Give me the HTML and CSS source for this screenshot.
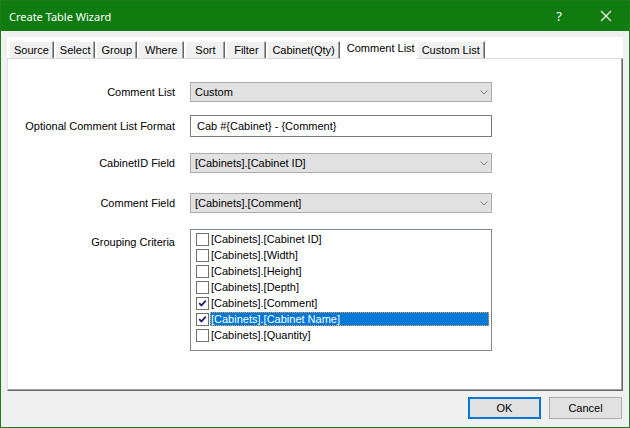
FILE: index.html
```html
<!DOCTYPE html>
<html>
<head>
<meta charset="utf-8">
<link rel="stylesheet" href="styles.css">
</head>
<body>
<div class="window">
  <header class="titlebar">
    <span class="title">Create Table Wizard</span>
    <div class="title-buttons">
      <span class="tb-btn help">?</span>
      <span class="tb-btn close">
        <svg width="12" height="12" viewBox="0 0 12 12"><path d="M1 1 L11 11 M11 1 L1 11" stroke="#fff" stroke-width="1.1" fill="none"/></svg>
      </span>
    </div>
  </header>
  <main class="client">
    <div class="tabctl">
      <div class="tabs">
        <span class="tab">Source</span>
        <span class="tab">Select</span>
        <span class="tab">Group</span>
        <span class="tab tab-where">Where</span>
        <span class="tab">Sort</span>
        <span class="tab">Filter</span>
        <span class="tab">Cabinet(Qty)</span>
        <span class="tab active">Comment List</span>
        <span class="tab">Custom List</span>
      </div>
      <div class="panel">
        <div class="row">
          <label class="lbl">Comment List</label>
          <div class="combo"><span>Custom</span><svg class="chev" width="8" height="5" viewBox="0 0 8 5"><path d="M0.5 0.5 L4 4 L7.5 0.5" stroke="#7a7a7a" fill="none"/></svg></div>
        </div>
        <div class="row gap-13">
          <label class="lbl">Optional Comment List Format</label>
          <div class="textbox">Cab #{Cabinet} - {Comment}</div>
        </div>
        <div class="row gap-16">
          <label class="lbl">CabinetID Field</label>
          <div class="combo"><span>[Cabinets].[Cabinet ID]</span><svg class="chev" width="8" height="5" viewBox="0 0 8 5"><path d="M0.5 0.5 L4 4 L7.5 0.5" stroke="#7a7a7a" fill="none"/></svg></div>
        </div>
        <div class="row gap-20">
          <label class="lbl">Comment Field</label>
          <div class="combo"><span>[Cabinets].[Comment]</span><svg class="chev" width="8" height="5" viewBox="0 0 8 5"><path d="M0.5 0.5 L4 4 L7.5 0.5" stroke="#7a7a7a" fill="none"/></svg></div>
        </div>
        <div class="row row-top gap-16">
          <label class="lbl lbl-top">Grouping Criteria</label>
          <div class="listbox">
            <div class="item"><span class="cb"></span><span class="itxt">[Cabinets].[Cabinet ID]</span></div>
            <div class="item"><span class="cb"></span><span class="itxt">[Cabinets].[Width]</span></div>
            <div class="item"><span class="cb"></span><span class="itxt">[Cabinets].[Height]</span></div>
            <div class="item"><span class="cb"></span><span class="itxt">[Cabinets].[Depth]</span></div>
            <div class="item"><span class="cb"><svg width="11" height="11" viewBox="0 0 11 11"><path d="M2.2 5.2 L4.4 7.4 L8.8 2.6" stroke="#1c1c7a" stroke-width="1.7" fill="none"/></svg></span><span class="itxt">[Cabinets].[Comment]</span></div>
            <div class="item"><span class="cb"><svg width="11" height="11" viewBox="0 0 11 11"><path d="M2.2 5.2 L4.4 7.4 L8.8 2.6" stroke="#1c1c7a" stroke-width="1.7" fill="none"/></svg></span><span class="itxt selected">[Cabinets].[Cabinet Name]</span></div>
            <div class="item"><span class="cb"></span><span class="itxt">[Cabinets].[Quantity]</span></div>
          </div>
        </div>
      </div>
    </div>
    <div class="footer">
      <button class="btn btn-default">OK</button>
      <button class="btn">Cancel</button>
    </div>
  </main>
</div>
</body>
</html>
```

FILE: styles.css
```css
html, body {
  margin: 0;
  padding: 0;
}
body {
  width: 630px;
  height: 428px;
  overflow: hidden;
  font-family: "Liberation Sans", Arial, sans-serif;
  font-size: 11px;
  color: #000;
}
.window {
  box-sizing: border-box;
  width: 630px;
  height: 428px;
  border: 1px solid #1c7d1c;
  background: #f0f0f0;
  display: flex;
  flex-direction: column;
}
.titlebar {
  height: 30px;
  flex: none;
  background: #107c10;
  color: #fff;
  display: flex;
  align-items: center;
  padding-left: 8px;
  font-family: "Noto Sans", "Open Sans", sans-serif;
  font-size: 11px;
}
.title-buttons {
  margin-left: auto;
  display: flex;
}
.tb-btn {
  width: 46px;
  height: 30px;
  display: flex;
  align-items: center;
  justify-content: center;
}
.help {
  font-size: 13px;
  padding-right: 2px;
  box-sizing: border-box;
}
.client {
  flex: 1;
  display: flex;
  flex-direction: column;
  padding: 6px 6px 0 6px;
}
.tabctl {
  height: 354px;
  background: #fff;
  display: flex;
  flex-direction: column;
}
.tabs {
  height: 21px;
  display: flex;
  align-items: flex-end;
  padding-left: 2px;
  position: relative;
  z-index: 1;
}
.tab {
  box-sizing: border-box;
  height: 17px;
  min-width: 40px;
  padding: 0 4px;
  display: flex;
  align-items: center;
  justify-content: center;
  background: #f0f0f0;
  border-left: 1px solid #fff;
  border-top: 1px solid #fff;
  border-right: 1px solid #696969;
  box-shadow: inset -1px 0 0 #a0a0a0;
  margin-right: 1px;
}
.tab-where {
  padding: 0 6px;
}
.tab.active {
  height: 21px;
  margin-bottom: -1px;
  background: #fff;
  border-right: none;
  box-shadow: none;
  padding: 0 2px 2px 5px;
  margin-right: 0;
}
.panel {
  flex: 1;
  border-top: 1px solid #d9d9d9;
  border-left: 1px solid #e3e3e3;
  border-right: 1px solid #696969;
  border-bottom: 1px solid #696969;
  box-shadow: inset -1px -1px 0 #a0a0a0;
  padding-top: 23px;
}
.row {
  display: flex;
  align-items: center;
}
.row-top {
  align-items: flex-start;
}
.gap-13 { margin-top: 13px; }
.gap-16 { margin-top: 16px; }
.gap-20 { margin-top: 20px; }
.lbl {
  width: 167px;
  text-align: right;
  margin-right: 15px;
}
.lbl-top {
  padding-top: 7px;
}
.combo {
  box-sizing: border-box;
  width: 302px;
  height: 20px;
  border: 1px solid #adadad;
  background: #e1e1e1;
  display: flex;
  align-items: center;
  padding: 0 3px 0 4px;
}
.chev {
  margin-left: auto;
}
.textbox {
  box-sizing: border-box;
  width: 302px;
  height: 22px;
  border: 1px solid #7a7a7a;
  background: #fff;
  display: flex;
  align-items: center;
  padding-left: 6px;
}
.listbox {
  box-sizing: border-box;
  width: 302px;
  height: 122px;
  border: 1px solid #828790;
  background: #fff;
  padding: 1px 2px 0 5px;
}
.item {
  height: 16px;
  display: flex;
  align-items: center;
}
.cb {
  box-sizing: border-box;
  width: 13px;
  height: 13px;
  border: 1px solid #707070;
  background: #fff;
  display: flex;
  align-items: center;
  justify-content: center;
  margin-right: 1px;
}
.itxt {
  padding: 0 1px;
  line-height: 14px;
}
.itxt.selected {
  flex: 1;
  background: #0078d7;
  color: #fff;
  outline: 1px dotted #f0a040;
  outline-offset: -1px;
}
.footer {
  flex: 1;
  display: flex;
  justify-content: flex-end;
  align-items: flex-start;
  padding-top: 6px;
  padding-right: 1px;
  gap: 8px;
}
.btn {
  box-sizing: border-box;
  width: 73px;
  height: 22px;
  border: 1px solid #adadad;
  background: #e1e1e1;
  font-family: "Liberation Sans", Arial, sans-serif;
  font-size: 11px;
  color: #000;
  padding: 0;
}
.btn-default {
  border: 2px solid #0078d7;
}
```
